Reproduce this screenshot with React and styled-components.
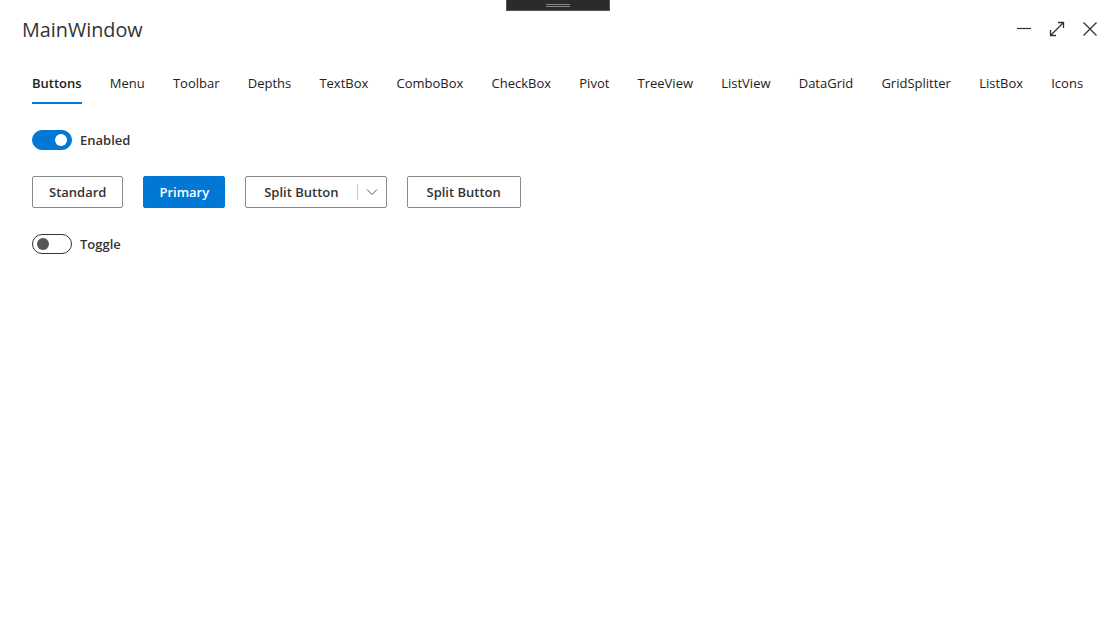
import React, { useState } from "react";
import styled, { createGlobalStyle } from "styled-components";

const tabs = [
  "Buttons",
  "Menu",
  "Toolbar",
  "Depths",
  "TextBox",
  "ComboBox",
  "CheckBox",
  "Pivot",
  "TreeView",
  "ListView",
  "DataGrid",
  "GridSplitter",
  "ListBox",
  "Icons",
];

const App = () => {
  const [active, setActive] = useState("Buttons");
  const [enabled, setEnabled] = useState(true);
  const [toggle, setToggle] = useState(false);

  return (
    <Window>
      <GlobalStyle />
      <DragHandle>
        <Grip />
      </DragHandle>
      <TitleBar>
        <Title>MainWindow</Title>
        <Controls>
          <ControlButton aria-label="Minimize">
            <svg width="16" height="16" viewBox="0 0 16 16">
              <path d="M1 7.5h14" stroke="#333" strokeWidth="1.2" />
            </svg>
          </ControlButton>
          <ControlButton aria-label="Maximize">
            <svg width="16" height="16" viewBox="0 0 16 16" fill="none">
              <path
                d="M1.5 14.5L14.5 1.5M9 1.5h5.5V7M1.5 9v5.5H7"
                stroke="#333"
                strokeWidth="1.3"
              />
            </svg>
          </ControlButton>
          <ControlButton aria-label="Close">
            <svg width="16" height="16" viewBox="0 0 16 16">
              <path
                d="M1.5 1.5l13 13M14.5 1.5l-13 13"
                stroke="#333"
                strokeWidth="1.3"
              />
            </svg>
          </ControlButton>
        </Controls>
      </TitleBar>

      <TabBar>
        {tabs.map((t) => (
          <Tab key={t} active={t === active} onClick={() => setActive(t)}>
            {t}
          </Tab>
        ))}
      </TabBar>

      <Content>
        <SwitchRow onClick={() => setEnabled(!enabled)}>
          <Switch on={enabled}>
            <Knob on={enabled} />
          </Switch>
          <SwitchLabel>Enabled</SwitchLabel>
        </SwitchRow>

        <ButtonRow>
          <Button>Standard</Button>
          <Button primary pad={15}>
            Primary
          </Button>
          <SplitButton>
            <SplitMain>Split Button</SplitMain>
            <SplitDivider />
            <SplitArrow>
              <svg width="12" height="8" viewBox="0 0 12 8" fill="none">
                <path d="M1 1.5l5 5 5-5" stroke="#555" strokeWidth="1" />
              </svg>
            </SplitArrow>
          </SplitButton>
          <Button pad={19}>Split Button</Button>
        </ButtonRow>

        <SwitchRow onClick={() => setToggle(!toggle)}>
          <Switch on={toggle}>
            <Knob on={toggle} />
          </Switch>
          <SwitchLabel>Toggle</SwitchLabel>
        </SwitchRow>
      </Content>
    </Window>
  );
};

export default App;

const GlobalStyle = createGlobalStyle`
  html, body {
    margin: 0;
    padding: 0;
    background: #ffffff;
  }
  body {
    font-family: "Open Sans", "Noto Sans", sans-serif;
    color: #222;
  }
`;

const Window = styled.div`
  position: relative;
  width: 1116px;
  height: 632px;
  background: #ffffff;
  overflow: hidden;
`;

const DragHandle = styled.div`
  position: absolute;
  top: -1px;
  left: 506px;
  width: 102px;
  height: 10px;
  background: #2b2b2b;
  border: 1px solid #555;
  display: flex;
  justify-content: center;
  align-items: center;
`;

const Grip = styled.div`
  width: 24px;
  height: 1px;
  border-top: 1px solid #888;
  border-bottom: 1px solid #888;
  margin-top: 1px;
`;

const TitleBar = styled.div`
  display: flex;
  align-items: center;
  justify-content: space-between;
  padding: 15px 18px 0 22px;
  height: 28px;
`;

const Title = styled.div`
  font-size: 19.8px;
  color: #333;
`;

const Controls = styled.div`
  display: flex;
  gap: 17px;
  align-items: center;
  margin-top: -1px;
`;

const ControlButton = styled.button`
  border: none;
  background: transparent;
  padding: 0;
  width: 16px;
  height: 16px;
  display: flex;
  cursor: pointer;
`;

const TabBar = styled.div`
  display: flex;
  gap: 28.2px;
  padding: 0 32px;
  margin-top: 31px;
`;

const Tab = styled.div`
  font-size: 13px;
  color: #222;
  font-weight: ${(p) => (p.active ? 600 : 400)};
  padding-bottom: 10px;
  border-bottom: 2px solid ${(p) => (p.active ? "#0078d4" : "transparent")};
  cursor: pointer;
  white-space: nowrap;
`;

const Content = styled.div`
  display: flex;
  flex-direction: column;
  align-items: flex-start;
  padding: 26px 32px 0;
  gap: 26px;
`;

const SwitchRow = styled.div`
  display: flex;
  align-items: center;
  gap: 8px;
  cursor: pointer;
`;

const Switch = styled.div`
  box-sizing: border-box;
  width: 40px;
  height: 20px;
  border-radius: 10px;
  background: ${(p) => (p.on ? "#0078d4" : "#ffffff")};
  border: 1px solid ${(p) => (p.on ? "#0078d4" : "#333")};
  display: flex;
  align-items: center;
  justify-content: ${(p) => (p.on ? "flex-end" : "flex-start")};
  padding: 0 4px;
`;

const Knob = styled.div`
  width: 12px;
  height: 12px;
  border-radius: 50%;
  background: ${(p) => (p.on ? "#ffffff" : "#555")};
`;

const SwitchLabel = styled.span`
  font-size: 13px;
  font-weight: 600;
  color: #333;
`;

const ButtonRow = styled.div`
  display: flex;
  gap: 20px;
`;

const Button = styled.button`
  box-sizing: border-box;
  height: 32px;
  padding: 0 ${(p) => p.pad ?? 16}px;
  border-radius: 2px;
  font-family: inherit;
  font-size: 13px;
  font-weight: 600;
  color: ${(p) => (p.primary ? "#ffffff" : "#333")};
  background: ${(p) => (p.primary ? "#0078d4" : "#ffffff")};
  border: 1px solid ${(p) => (p.primary ? "#0078d4" : "#8a8a8a")};
  cursor: pointer;
`;

const SplitButton = styled.div`
  box-sizing: border-box;
  display: flex;
  align-items: center;
  height: 32px;
  border: 1px solid #8a8a8a;
  border-radius: 2px;
`;

const SplitMain = styled.span`
  font-size: 13px;
  font-weight: 600;
  color: #333;
  padding: 0 18px;
`;

const SplitDivider = styled.div`
  width: 1px;
  height: 16px;
  background: #c8c8c8;
`;

const SplitArrow = styled.span`
  display: flex;
  align-items: center;
  justify-content: center;
  width: 28px;
`;
